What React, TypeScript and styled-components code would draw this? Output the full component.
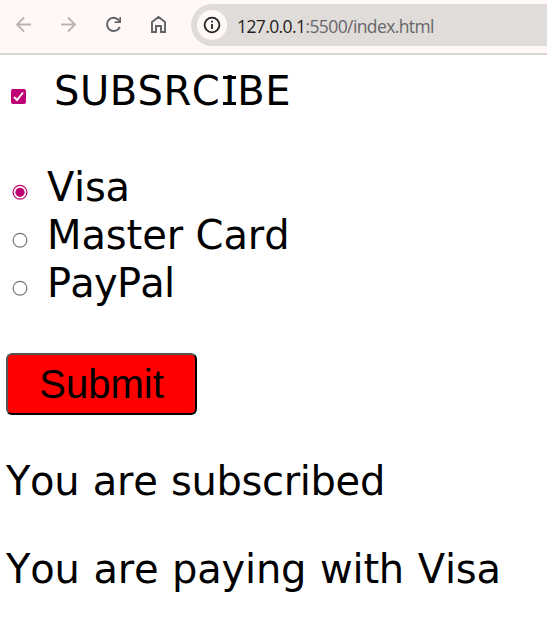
import React from "react";
import styled, { createGlobalStyle } from "styled-components";

const GlobalStyle = createGlobalStyle`
  html, body { margin: 0; background: #fff; overflow: hidden; }
`;

const Toolbar = styled.header`
  box-sizing: border-box;
  height: 55px;
  display: flex;
  align-items: flex-start;
  background: #fff8f6;
  border-bottom: 2px solid #dad6d7;
`;

const NavIcons = styled.nav`
  display: flex;
  gap: 21px;
  padding: 13px 0 0 12px;
  width: 179px;
  box-sizing: border-box;
  flex: none;
`;

const NavIcon = styled.svg<{ $muted?: boolean }>`
  width: 24px;
  height: 24px;
  flex: none;
  fill: none;
  stroke: ${(p) => (p.$muted ? "#b9b4b3" : "#5f6368")};
  stroke-width: ${(p) => (p.$muted ? 1.8 : 1.9)};
`;

const AddressBar = styled.div`
  display: flex;
  align-items: center;
  box-sizing: border-box;
  flex: 1;
  height: 42px;
  margin: 4px 0 0 12px;
  padding-left: 6px;
  border-radius: 21px 0 0 21px;
  background: #e0dcd9;
`;

const InfoBadge = styled.span`
  display: grid;
  place-items: center;
  width: 30px;
  height: 30px;
  border-radius: 50%;
  background: #fff8f6;
`;

const Url = styled.span`
  margin: 1px 0 0 10px;
  font: 17.5px/24px "Open Sans", sans-serif;
  letter-spacing: -0.6px;
  white-space: nowrap;
  color: #66666a;
`;

const Host = styled.span`
  color: #1f1f1f;
`;

const Page = styled.main`
  display: flex;
  flex-direction: column;
  padding-top: 12px;
  font: 40px/48px "DejaVu Sans", Verdana, sans-serif;
  color: #000;
`;

const Choice = styled.label<{ $indent: number; $gap: number }>`
  display: flex;
  align-items: flex-start;
  height: 48px;
  padding-left: ${(p) => p.$indent}px;
  gap: ${(p) => p.$gap}px;
`;

const Options = styled.section`
  display: flex;
  flex-direction: column;
  margin-top: 48px;
`;

const Mark = styled.svg`
  flex: none;
  width: 16px;
  height: 16px;
  margin-top: 21px;
`;

const Label = styled.span<{ $tracking?: number; $wordGap?: number }>`
  white-space: pre;
  font-kerning: none;
  letter-spacing: ${(p) => p.$tracking ?? 0}px;
  word-spacing: ${(p) => p.$wordGap ?? 0}px;
`;

const SerifI = styled.span`
  display: inline-block;
  position: relative;
  width: 17px;
  margin: 0 -1px 0 1px;
  text-align: center;
  letter-spacing: 0;
  &::before,
  &::after {
    content: "";
    position: absolute;
    left: 2px;
    width: 13px;
    height: 3px;
    background: #000;
  }
  &::before { top: 9px; }
  &::after { top: 35px; }
`;

const Submit = styled.button`
  box-sizing: border-box;
  width: 191px;
  height: 62px;
  margin: 46px 0 0 6px;
  padding: 0;
  border: 2px solid;
  border-color: #555 #000 #000 #555;
  border-radius: 6px;
  background: #f00;
  font: 40px/56px "Liberation Sans", Arial, sans-serif;
  color: #000;
`;

const Message = styled.p<{ $top: number }>`
  margin: ${(p) => p.$top}px 0 0 6px;
`;

const options = [
  { name: "Visa", tracking: -0.3 },
  { name: "Master Card", tracking: -0.1 },
  { name: "PayPal", tracking: -0.8 },
];

function Radio({ checked }: { checked: boolean }) {
  return (
    <Mark viewBox="0 0 16 16">
      <circle cx="8" cy="8.3" r="6.9" fill="#fff" stroke={checked ? "#bf0074" : "#767676"} strokeWidth="1.2" />
      {checked && <circle cx="8" cy="8.3" r="4.6" fill="#bf0074" />}
    </Mark>
  );
}

export default function App() {
  return (
    <>
      <GlobalStyle />
      <Toolbar>
        <NavIcons>
          <NavIcon $muted viewBox="0 0 24 24">
            <path d="M19 11.5H5.5M12 4.5l-7 7 7 7" />
          </NavIcon>
          <NavIcon $muted viewBox="0 0 24 24">
            <path d="M4 11.5h13.5M11 4.5l7 7-7 7" />
          </NavIcon>
          <NavIcon viewBox="0 0 24 24">
            <path d="M16.6 7A6.6 6.6 0 1 0 17.8 13.8" />
            <path d="M19 4v6h-6.5v-1.6h2.8L17.4 6.600V4z" fill="#5f6368" stroke="none" />
          </NavIcon>
          <NavIcon viewBox="0 0 24 24">
            <path d="M5 9l6.500-5L18 9v10h-4v-6H9v6H5z" />
          </NavIcon>
        </NavIcons>
        <AddressBar>
          <InfoBadge>
            <svg width="18" height="18" viewBox="0 0 18 18" fill="none" stroke="#202124" strokeWidth="1.8">
              <circle cx="9" cy="9" r="7.4" />
              <path d="M9 8v5M9 4.800v1.800" />
            </svg>
          </InfoBadge>
          <Url>
            <Host>127.0.0.1</Host>:5500/index.html
          </Url>
        </AddressBar>
      </Toolbar>
      <Page>
        <Choice $indent={11} $gap={27}>
          <Mark viewBox="0 0 16 16">
            <rect x="0" y="1" width="15" height="15" rx="2" fill="#bf0074" />
            <path d="M3 9l3 3 6-7.500" fill="none" stroke="#fff" strokeWidth="2" />
          </Mark>
          <Label $tracking={0.5}>
            SUBSRC<SerifI>I</SerifI>BE
          </Label>
        </Choice>
        <Options>
          {options.map(({ name, tracking }, i) => (
            <Choice key={name} $indent={12} $gap={19}>
              <Radio checked={i === 0} />
              <Label $tracking={tracking}>{name}</Label>
            </Choice>
          ))}
        </Options>
        <Submit>Submit</Submit>
        <Message $top={42}>
          <Label $tracking={-0.35} $wordGap={1.3}>You are subscribed</Label>
        </Message>
        <Message $top={40}>
          <Label $tracking={-0.22} $wordGap={1.3}>You are paying with Visa</Label>
        </Message>
      </Page>
    </>
  );
}
